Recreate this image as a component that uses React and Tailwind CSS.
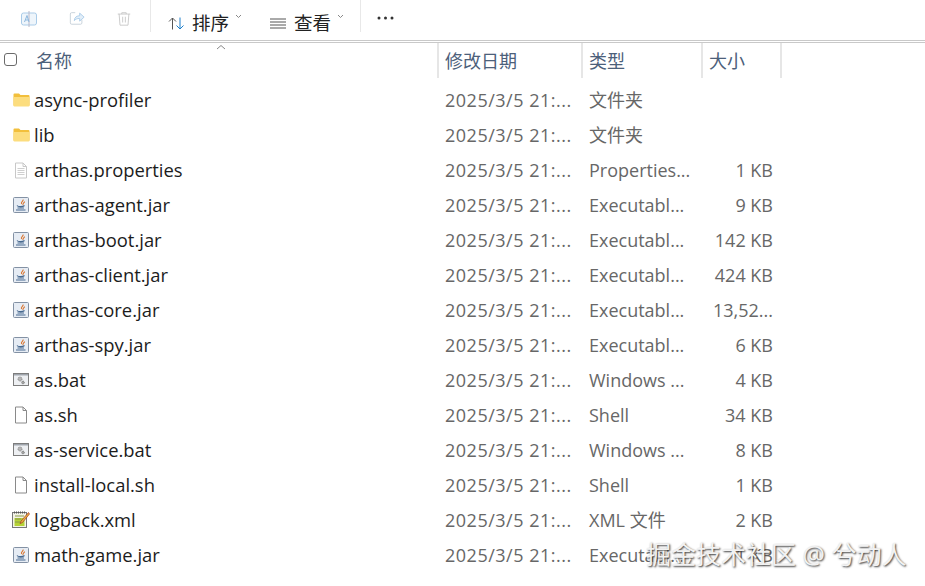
import React from 'react';

const FONT = "[font-family:'Open_Sans','Noto_Sans_CJK_SC',sans-serif]";

const FolderIcon = () => (
  <svg width="17" height="15" viewBox="0 0 17 15" className="mb-[3px]">
    <path d="M0.5 2.500a1 1 0 0 1 1-1h4.500l1.500 1.500h8a1 1 0 0 1 1 1v9a1 1 0 0 1-1 1h-14a1 1 0 0 1-1-1z" fill="#f2bf3c" />
    <path d="M0.500 5h16v8.500a1 1 0 0 1-1 1h-14a1 1 0 0 1-1-1z" fill="#fcdd7e" />
  </svg>
);

const TextIcon = () => (
  <svg width="16" height="17" viewBox="0 0 16 17" fill="none">
    <path d="M2.500 1h7.500l3.500 3.500V16h-11z" fill="#fff" stroke="#c8c8c8" />
    <path d="M10 1v3.500h3.500" stroke="#c8c8c8" />
    <path d="M4.500 6.500h7M4.500 8.500h7M4.500 10.500h7M4.500 12.500h7" stroke="#cfcfcf" />
  </svg>
);

const BlankIcon = () => (
  <svg width="16" height="18" viewBox="0 0 16 18" fill="none" className="mb-[2px]">
    <path d="M2.500 1h7.500l3.500 3.500V17h-11z" fill="#fff" stroke="#8a8a8a" />
    <path d="M10 1v3.500h3.500" stroke="#8a8a8a" />
  </svg>
);

const JarIcon = () => (
  <svg width="17" height="17" viewBox="0 0 17 17" fill="none">
    <rect x="0.500" y="0.500" width="15" height="15" rx="1" fill="#e6ecf4" stroke="#8391a4" />
    <path d="M10 2.500C11 4 7.500 5 8.500 7M11.500 4.500C11.500 6 9.500 6 10 8" stroke="#d9722c" strokeWidth="1.100" />
    <path d="M4 8.500c1 1.500 6 1.500 7.500 0M4.500 11h6.500M3 13h9.500" stroke="#46688f" strokeWidth="1.100" />
  </svg>
);

const BatIcon = () => (
  <svg width="17" height="14" viewBox="0 0 17 14" fill="none" className="mb-[2px]">
    <rect x="0.500" y="0.500" width="15" height="12" fill="#eef0f3" stroke="#7d7d7d" />
    <rect x="1" y="1" width="14" height="1.500" fill="#a0a6ae" />
    <circle cx="7" cy="6" r="2" fill="#b5b5b5" stroke="#6e6e6e" strokeWidth="0.800" strokeDasharray="1 0.600" />
    <circle cx="10" cy="9.500" r="1.400" fill="#a5a5a5" stroke="#666" strokeWidth="0.700" strokeDasharray="1 0.500" />
  </svg>
);

const XmlIcon = () => (
  <svg width="18" height="18" viewBox="0 0 18 18" fill="none" className="mb-[2px]">
    <rect x="0.500" y="1.500" width="14" height="15" fill="#f3f3e6" stroke="#777" />
    <path d="M2 1.500h11" stroke="#555" strokeDasharray="1 1" strokeWidth="2" />
    <rect x="2.500" y="7" width="10" height="8" fill="#b5d334" />
    <path d="M3 5h9M3 8h6M3 11h5" stroke="#8a9a4a" />
    <path d="M16.500 1.500L9 10l-1 2.500 2.500-1L17.500 3z" fill="#e8b23a" stroke="#a3322a" strokeWidth="0.700" />
  </svg>
);

const files = [
  ['async-profiler', '2025/3/5 21:...', '文件夹', '', 'folder'],
  ['lib', '2025/3/5 21:...', '文件夹', '', 'folder'],
  ['arthas.properties', '2025/3/5 21:...', 'Properties...', '1 KB', 'text'],
  ['arthas-agent.jar', '2025/3/5 21:...', 'Executabl...', '9 KB', 'jar'],
  ['arthas-boot.jar', '2025/3/5 21:...', 'Executabl...', '142 KB', 'jar'],
  ['arthas-client.jar', '2025/3/5 21:...', 'Executabl...', '424 KB', 'jar'],
  ['arthas-core.jar', '2025/3/5 21:...', 'Executabl...', '13,52...', 'jar'],
  ['arthas-spy.jar', '2025/3/5 21:...', 'Executabl...', '6 KB', 'jar'],
  ['as.bat', '2025/3/5 21:...', 'Windows ...', '4 KB', 'bat'],
  ['as.sh', '2025/3/5 21:...', 'Shell', '34 KB', 'blank'],
  ['as-service.bat', '2025/3/5 21:...', 'Windows ...', '8 KB', 'bat'],
  ['install-local.sh', '2025/3/5 21:...', 'Shell', '1 KB', 'blank'],
  ['logback.xml', '2025/3/5 21:...', 'XML 文件', '2 KB', 'xml'],
  ['math-game.jar', '2025/3/5 21:...', 'Executabl...', '1 KB', 'jar'],
];

const icons = {
  folder: FolderIcon,
  text: TextIcon,
  blank: BlankIcon,
  jar: JarIcon,
  bat: BatIcon,
  xml: XmlIcon,
};

const Chevron = () => (
  <svg width="7" height="5" viewBox="0 0 7 5" fill="none" className="mb-[14px] ml-[6px]">
    <path d="M1 1l2.500 2.500L6 1" stroke="#888" />
  </svg>
);

const Toolbar = () => (
  <div className="flex h-[40px] items-start">
    <div className="flex h-[32px] w-[151px] items-start gap-[31px] border-r border-[#e8e8e8] pl-[20px] pt-[10px]">
      <svg width="18" height="18" viewBox="0 0 18 18" fill="none" stroke="#a9cbe8">
        <rect x="1.500" y="3" width="15" height="12" rx="2" fill="#eef5fb" />
        <path d="M9 1v16" stroke="#b8b8c8" />
        <path d="M4.500 12l2.500-6.500L9 12M5.500 10h3" stroke="#8db8de" />
      </svg>
      <svg width="16" height="16" viewBox="0 0 18 18" fill="none" stroke="#a9cbe8">
        <path d="M7 3H3a1.500 1.500 0 0 0-1.500 1.500v10A1.500 1.500 0 0 0 3 16h10a1.500 1.500 0 0 0 1.500-1.500V11" stroke="#c4cfd8" />
        <path d="M6 12c0-4 3-5.500 6-5.500V3.500l5 4.500-5 4.500V9.500c-3 0-5 1-6 2.500z" fill="#e3eff9" />
      </svg>
      <svg width="16" height="17" viewBox="0 0 18 18" fill="none" stroke="#c6c6c6">
        <path d="M2 4h14M6.500 4V2.500h5V4M3.500 4l1 12.500h9l1-12.500M7.500 7v6.500M10.500 7v6.500" />
      </svg>
    </div>
    <div className="flex h-[40px] items-center pl-[17px] pt-[6px]">
      <svg width="17" height="13" viewBox="0 0 17 13" fill="none">
        <path d="M4.500 12.500V1M1 4.500L4.500 1 8 4.500" stroke="#555" />
        <path d="M12 0.500V12M8.500 8.500L12 12l3.500-3.500" stroke="#1f7fc9" />
      </svg>
      <span className="ml-[7px] text-[18.500px] text-[#222]">排序</span>
      <Chevron />
    </div>
    <div className="flex h-[40px] items-center pl-[28px] pt-[6px]">
      <svg width="17" height="11" viewBox="0 0 17 11" fill="none" stroke="#555">
        <path d="M0 1h16M0 4h16M0 7h16M0 10h16" />
      </svg>
      <span className="ml-[7px] text-[18.500px] text-[#222]">查看</span>
      <Chevron />
    </div>
    <div className="ml-[16px] flex h-[32px] items-center border-l border-[#e8e8e8] pl-[16px]">
      <svg width="17" height="4" viewBox="0 0 17 4" fill="#333" className="mt-[4px]">
        <circle cx="2" cy="2" r="1.500" />
        <circle cx="8.500" cy="2" r="1.500" />
        <circle cx="15" cy="2" r="1.500" />
      </svg>
    </div>
  </div>
);

const Header = () => (
  <div className="relative flex h-[35px] items-stretch text-[18px] text-[#4c607a]">
    <div className="flex w-[437px] items-center pl-[4px]">
      <span className="mb-[3px] h-[13px] w-[13px] rounded-[3px] border border-[#6b6b6b]" />
      <span className="ml-[19px] pt-[2px]">名称</span>
    </div>
    <div className="flex w-[144px] items-center border-l-2 border-[#e6e6e6] pl-[6px] pt-[2px]">修改日期</div>
    <div className="flex w-[120px] items-center border-l-2 border-[#e6e6e6] pl-[6px] pt-[2px]">类型</div>
    <div className="flex w-[81px] items-center border-x-2 border-[#e6e6e6] pl-[6px] pt-[2px]">大小</div>
    <svg width="10" height="6" viewBox="0 0 10 6" fill="none" className="absolute left-[216px] top-[1px]">
      <path d="M1 5l4-3.500L9 5" stroke="#888" />
    </svg>
  </div>
);

const Row = ({ name, date, type, size, icon }) => {
  const Icon = icons[icon];
  return (
    <div className="flex h-[35px] items-center text-[18px] text-[#676767]">
      <div className="flex h-[35px] w-[437px] items-center">
        <div className="flex w-[34px] justify-center pl-[8px]">
          <Icon />
        </div>
        <span className="pb-[2px] text-[18.400px] leading-[27px] text-[#1c1c1c]">{name}</span>
      </div>
      <div className="w-[144px] pl-[8px] tracking-[0.5px] whitespace-nowrap">{date}</div>
      <div className="w-[120px] pl-[8px] whitespace-nowrap">{type}</div>
      <div className="w-[80px] pr-[8px] text-right whitespace-nowrap">{size}</div>
    </div>
  );
};

export default function App() {
  return (
    <div className={`relative h-[586px] w-[925px] overflow-hidden bg-white ${FONT}`}>
      <Toolbar />
      <div className="h-[3px] border-y border-[#c9c9c9]" />
      <Header />
      <div className="mt-[5px]">
        {files.map(([name, date, type, size, icon]) => (
          <Row key={name} name={name} date={date} type={type} size={size} icon={icon} />
        ))}
      </div>
      <div className="absolute left-[646px] top-[536px] text-[25px] whitespace-nowrap text-[#f2f2f2] [text-shadow:1px_1px_2px_#333]">
        掘金技术社区 @ 兮动人
      </div>
    </div>
  );
}
